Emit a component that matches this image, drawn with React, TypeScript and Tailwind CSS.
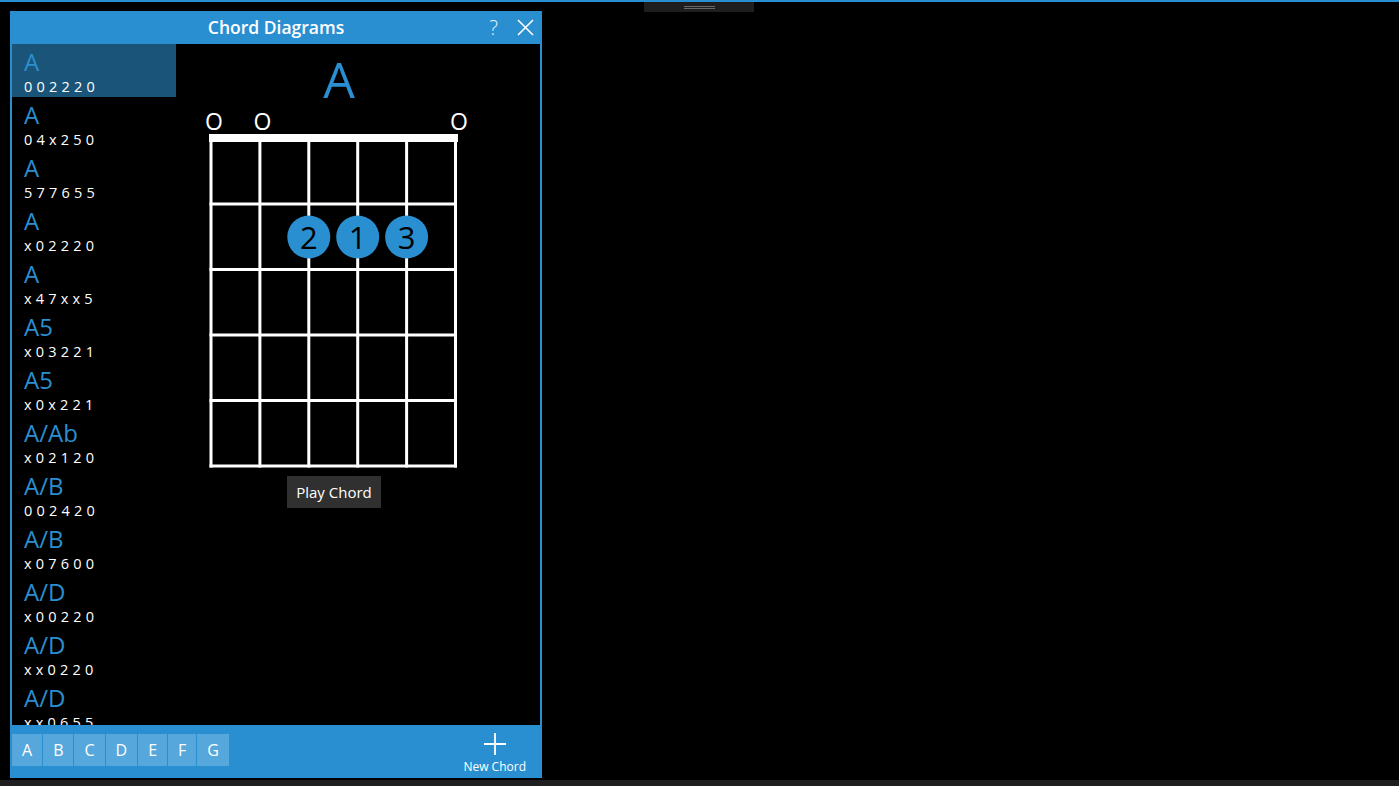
import React from "react";

const BLUE = "#2a8fd0";

const chords: { name: string; frets: string }[] = [
  { name: "A", frets: "002220" },
  { name: "A", frets: "04x250" },
  { name: "A", frets: "577655" },
  { name: "A", frets: "x02220" },
  { name: "A", frets: "x47xx5" },
  { name: "A5", frets: "x03221" },
  { name: "A5", frets: "x0x221" },
  { name: "A/Ab", frets: "x02120" },
  { name: "A/B", frets: "002420" },
  { name: "A/B", frets: "x07600" },
  { name: "A/D", frets: "x00220" },
  { name: "A/D", frets: "xx0220" },
  { name: "A/D", frets: "xx0655" },
];

const strings = [11, 59.9, 108.8, 157.7, 206.6, 255.5];
const frets = [96, 161.5, 227, 292.5, 358];
const fingers = [
  { x: 108.8, n: "2" },
  { x: 157.7, n: "1" },
  { x: 206.6, n: "3" },
];

const Fretboard: React.FC = () => (
  <svg width="270" height="372" viewBox="0 0 270 372" className="block">
    <g transform="translate(0 10)">
      {[14, 62.5, 259].map((x) => (
        <text
          key={x}
          x={x}
          y={22}
          textAnchor="middle"
          fill="#fff"
          fontSize="23"
          fontFamily="'Open Sans', sans-serif"
        >
          O
        </text>
      ))}
      <rect x={9} y={26} width={249} height={8} fill="#fff" />
      {strings.map((x) => (
        <line key={x} x1={x} y1={26} x2={x} y2={359.5} stroke="#fff" strokeWidth={3} />
      ))}
      {frets.map((y) => (
        <line key={y} x1={9.5} y1={y} x2={257} y2={y} stroke="#fff" strokeWidth={3} />
      ))}
      {fingers.map((f) => (
        <g key={f.n}>
          <circle cx={f.x} cy={129} r={21.5} fill={BLUE} />
          <text
            x={f.x}
            y={140.5}
            textAnchor="middle"
            fill="#000"
            fontSize="31"
            fontFamily="'Open Sans', sans-serif"
          >
            {f.n}
          </text>
        </g>
      ))}
    </g>
  </svg>
);

const App: React.FC = () => {
  return (
    <div
      className="relative w-[1399px] h-[786px] bg-black overflow-hidden text-white"
      style={{ fontFamily: "'Open Sans', 'Noto Sans', sans-serif" }}
    >
      {/* top edge + drag tab */}
      <div className="h-[2px] bg-[#2a8fd0]" />
      <div className="absolute left-[644px] top-[2px] w-[110px] h-[10px] bg-[#1e1e1e] flex flex-col items-center justify-center gap-[1px]">
        <div className="w-[31px] h-px bg-[#6a6a6a]" />
        <div className="w-[31px] h-px bg-[#6a6a6a]" />
      </div>

      {/* Chord Diagrams panel */}
      <div className="ml-[10px] mt-[9px] w-[532px] h-[767px] bg-[#2a8fd0] px-[2px] flex flex-col">
        {/* title bar */}
        <div className="relative h-[33px] flex items-center justify-center">
          <span className="text-[17.5px] font-semibold leading-none">Chord Diagrams</span>
          <div className="absolute right-[6px] top-0 h-full flex items-center gap-[19px]">
            <span className="text-[20px] font-light leading-none text-[#e8f2fa]">?</span>
            <svg width="17" height="17" viewBox="0 0 17 17">
              <path d="M1 1L16 16M16 1L1 16" stroke="#fff" strokeWidth="1.6" />
            </svg>
          </div>
        </div>

        {/* content */}
        <div className="flex-1 bg-black flex min-h-0">
          {/* chord list */}
          <div className="w-[164px] overflow-hidden">
            {chords.map((c, i) => (
              <div
                key={i}
                className={`h-[53px] pl-[12px] pt-[5px] ${i === 0 ? "bg-[#1a5579]" : ""}`}
              >
                <div className="text-[24px] leading-[26px] text-[#2a8fd0]">{c.name}</div>
                <div className="mt-[3px] text-[14.5px] leading-[18px] tracking-[4.2px] text-white">
                  {c.frets}
                </div>
              </div>
            ))}
          </div>

          {/* diagram */}
          <div className="flex-1 pl-[24px]">
            <div className="w-[270px] flex flex-col items-center">
              <div className="pt-[10px] pl-[8px] text-[50px] leading-[50px] text-[#2a8fd0]">A</div>
              <div className="-mt-[6px]">
                <Fretboard />
              </div>
              <button className="mt-[6px] -ml-[2px] h-[32px] px-[9px] bg-[#303030] text-[15px] text-white leading-none">
                Play Chord
              </button>
            </div>
          </div>
        </div>

        {/* bottom app bar */}
        <div className="h-[53px] flex items-start justify-between">
          <div className="mt-[9px] flex gap-px">
            {["A", "B", "C", "D", "E", "F", "G"].map((l) => (
              <button
                key={l}
                className="h-[32px] px-[10px] bg-[#55a7dc] text-[16px] text-white leading-none"
              >
                {l}
              </button>
            ))}
          </div>
          <div className="mr-[14px] mt-[7px] flex flex-col items-center">
            <svg width="24" height="24" viewBox="0 0 24 24">
              <path d="M12 1V23M1 12H23" stroke="#fff" strokeWidth="1.8" />
            </svg>
            <span className="mt-[5px] text-[12px] leading-none text-white">New Chord</span>
          </div>
        </div>
      </div>

      {/* bottom strip */}
      <div className="absolute left-0 bottom-0 w-full h-[6px] bg-[#1f1f1f]" />
    </div>
  );
};

export default App;
